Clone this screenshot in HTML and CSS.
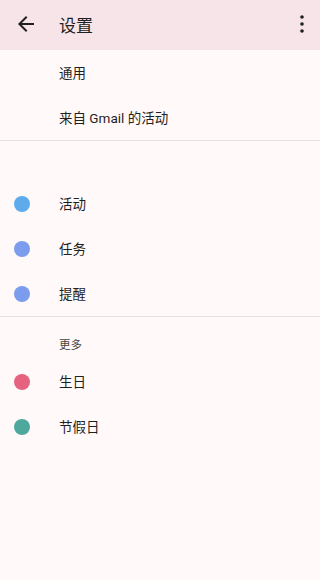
FILE: index.html
```html
<!DOCTYPE html>
<html lang="zh-CN">
<head>
<meta charset="utf-8">
<link rel="stylesheet" href="styles.css">
</head>
<body>
<div class="app">
  <header class="topbar">
    <span class="icon-btn back">
      <svg width="24" height="24" viewBox="0 0 24 24"><path d="M20 11H7.83l5.59-5.59L12 4l-8 8 8 8 1.41-1.41L7.83 13H20v-2z" fill="#1f1f1f"/></svg>
    </span>
    <h1 class="title">设置</h1>
    <span class="icon-btn more">
      <svg width="24" height="24" viewBox="0 0 24 24"><circle cx="12" cy="5" r="1.8" fill="#1f1f1f"/><circle cx="12" cy="12" r="1.8" fill="#1f1f1f"/><circle cx="12" cy="19" r="1.8" fill="#1f1f1f"/></svg>
    </span>
  </header>
  <section class="group">
    <div class="row"><span class="lead"></span><span class="label">通用</span></div>
    <div class="row"><span class="lead"></span><span class="label">来自 Gmail 的活动</span></div>
  </section>
  <div class="divider"></div>
  <section class="group">
    <div class="sub-head first"></div>
    <div class="row"><span class="lead"><i class="dot dot-blue"></i></span><span class="label">活动</span></div>
    <div class="row"><span class="lead"><i class="dot dot-indigo"></i></span><span class="label">任务</span></div>
    <div class="row"><span class="lead"><i class="dot dot-indigo"></i></span><span class="label">提醒</span></div>
  </section>
  <div class="divider"></div>
  <section class="group">
    <div class="sub-head">更多</div>
    <div class="row"><span class="lead"><i class="dot dot-pink"></i></span><span class="label">生日</span></div>
    <div class="row"><span class="lead"><i class="dot dot-teal"></i></span><span class="label">节假日</span></div>
  </section>
</div>
</body>
</html>
```
FILE: styles.css
```css
* { box-sizing: border-box; }
html, body { margin: 0; padding: 0; }
body {
  width: 320px;
  height: 580px;
  background: #fffaf9;
  font-family: Roboto, "Noto Sans CJK SC", "Noto Sans", sans-serif;
  color: #1f1f1f;
  overflow: hidden;
}
.app { display: flex; flex-direction: column; }
.topbar {
  height: 50px;
  background: #f7e4e8;
  display: flex;
  align-items: center;
}
.icon-btn { display: flex; align-items: center; justify-content: center; width: 24px; height: 24px; }
.back { margin-left: 14px; margin-top: -2px; }
.title {
  margin: 0 0 0 21px;
  font-size: 17px;
  font-weight: 400;
  flex: 1;
  margin-top: -2px;
}
.more { margin-right: 6px; margin-top: -2px; }
.group { display: flex; flex-direction: column; }
.row {
  height: 45px;
  display: flex;
  align-items: center;
}
.lead {
  width: 59px;
  display: flex;
  justify-content: flex-start;
  padding-left: 14px;
}
.label { font-size: 13.5px; line-height: 1; padding-top: 2px; }
.divider { height: 1px; background: #e7e2e2; }
.sub-head {
  height: 42px;
  padding-left: 59px;
  padding-top: 21px;
  font-size: 11.5px;
  line-height: 14px;
  color: #4a4545;
}
.sub-head.first { height: 40px; }
.dot { display: block; width: 16px; height: 16px; border-radius: 50%; }
.dot-blue { background: #5eaaeb; }
.dot-indigo { background: #7c9cee; }
.dot-pink { background: #e5637f; }
.dot-teal { background: #4ea89c; }
```
